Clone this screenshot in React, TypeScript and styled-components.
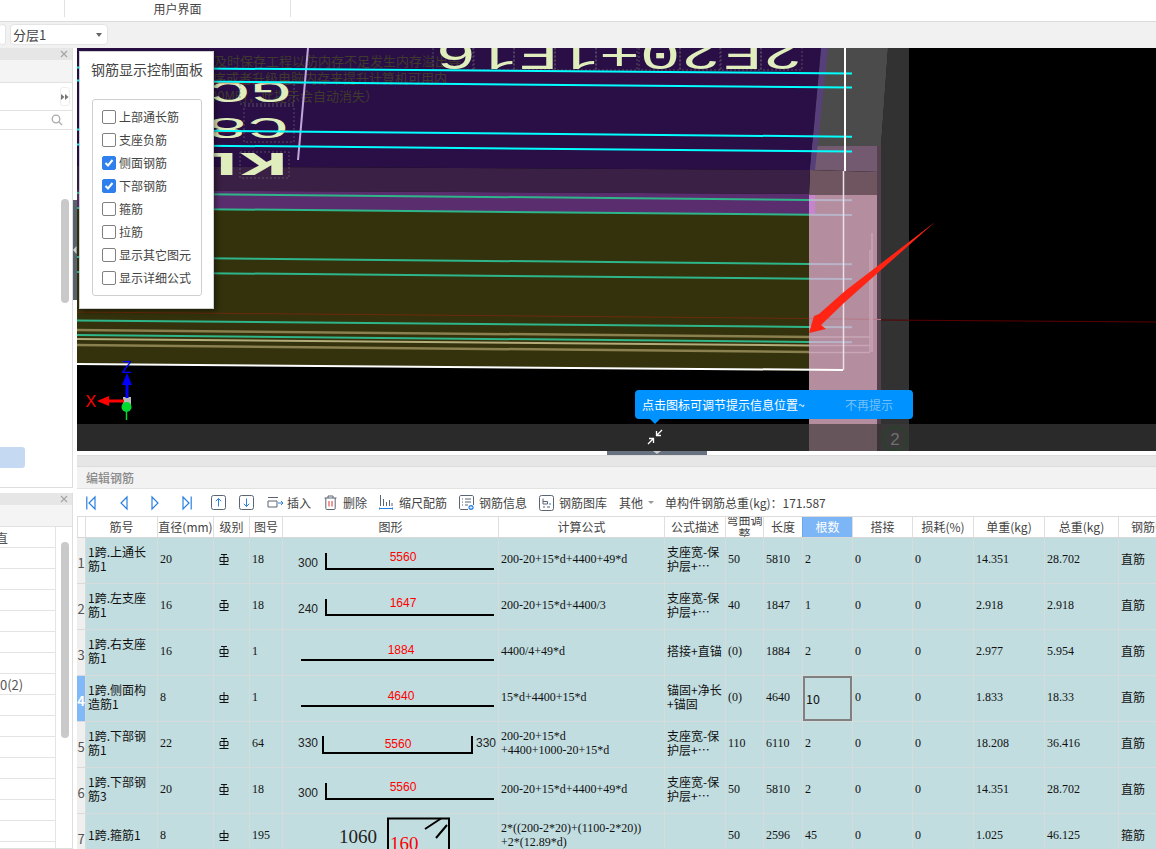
import React from "react";
import styled, { createGlobalStyle } from "styled-components";

const CJK = `"Noto Sans CJK SC", "Noto Sans", sans-serif`;
const MONO = `"Liberation Mono", "DejaVu Sans Mono", monospace`;
const SERIF = `"Liberation Serif", serif`;
const SANS = `"Liberation Sans", Arial, sans-serif`;

const Global = createGlobalStyle`
  html, body { margin: 0; padding: 0; background: #fff; overflow: hidden; }
  body { font-family: ${CJK}; font-size: 12px; color: #333; }
  * { box-sizing: border-box; }
`;

const Page = styled.div`
  width: 1156px;
  height: 849px;
  display: flex;
  flex-direction: column;
  overflow: hidden;
`;
const Ribbon = styled.div`
  height: 22px;
  flex: none;
  display: grid;
  grid-template-columns: 65px 226px 1fr;
  border-bottom: 1px solid #dcdcdc;
  background: #fff;
`;
const RibbonCell = styled.div`
  height: 17px;
  border-right: 1px solid #e2e2e2;
  font-size: 12px;
  line-height: 18px;
  text-align: center;
  color: #444;
  &:last-child { border-right: 0; }
`;
const SelectBar = styled.div`
  height: 26px;
  flex: none;
  display: flex;
  gap: 4px;
  padding-top: 2px;
  background: #f1f1f1;
`;
const SelectBox = styled.div<{ $w: number; $clipped?: boolean }>`
  width: ${(p) => p.$w}px;
  height: 21px;
  display: flex;
  align-items: center;
  justify-content: space-between;
  padding: 0 3px 0 2px;
  background: #fff;
  border: 1px solid #e4e4e4;
  border-radius: 4px;
  border-left-width: ${(p) => (p.$clipped ? 0 : 1)}px;
  font-size: 13px;
  color: #444;
`;
const Caret = styled.i`
  width: 0;
  height: 0;
  margin-right: 2px;
  border-left: 3px solid transparent;
  border-right: 3px solid transparent;
  border-top: 4px solid #666;
`;
const Main = styled.div`
  flex: 1;
  min-height: 0;
  display: flex;
`;
const LeftCol = styled.div`
  width: 73px;
  flex: none;
  display: flex;
  flex-direction: column;
  gap: 5px;
  background: #fff;
`;
const SidePanel = styled.section<{ $h: number }>`
  height: ${(p) => p.$h}px;
  flex: none;
  display: flex;
  flex-direction: column;
  border-right: 1px solid #dedede;
  border-bottom: 1px solid #dedede;
  overflow: hidden;
`;
const PaneHead = styled.div`
  height: 12px;
  flex: none;
  display: flex;
  justify-content: flex-end;
  align-items: center;
  padding-right: 4px;
  background: #e6e6e6;
  color: #999;
`;
const PaneBand = styled.div<{ $h: number }>`
  height: ${(p) => p.$h}px;
  flex: none;
  background: #f4f4f4;
  border-bottom: 1px solid #e2e2e2;
`;
const PaneRow = styled.div<{ $h: number }>`
  height: ${(p) => p.$h}px;
  flex: none;
  display: flex;
  align-items: center;
  justify-content: flex-end;
  padding-right: 2px;
  border-bottom: 1px solid #e2e2e2;
`;
const MiniBtn = styled.div`
  width: 10px;
  height: 19px;
  display: flex;
  align-items: center;
  justify-content: center;
  background: #fff;
  border: 1px solid #eee;
  border-radius: 3px;
`;
const SearchGlyph = styled.svg`
  margin-right: 7px;
`;
const PaneBody = styled.div`
  position: relative;
  flex: 1;
  min-height: 0;
`;
const Pill = styled.div`
  width: 25px;
  height: 21px;
  margin-top: 317px;
  background: #c5daf2;
  border-radius: 0 3px 3px 0;
`;
const ScrollThumb = styled.div<{ $top: number; $h: number }>`
  position: absolute;
  top: ${(p) => p.$top}px;
  left: 61px;
  width: 8px;
  height: ${(p) => p.$h}px;
  background: #c9c9c9;
  border-radius: 4px;
`;
const ListRow = styled.div<{ $indent: number }>`
  width: 56px;
  height: 21px;
  border-right: 1px solid #e4e4e4;
  border-bottom: 1px solid #e4e4e4;
  overflow: hidden;
  font-size: 13px;
  line-height: 21px;
  white-space: nowrap;
  text-indent: ${(p) => p.$indent}px;
  color: #555;
`;
const Splitter = styled.div`
  width: 4px;
  flex: none;
  padding-top: 152px;
  background: #fff;
`;
const SplitGrip = styled.div`
  height: 100px;
  display: flex;
  align-items: center;
  background: #59616d;
  color: #ccc;
`;
const RightCol = styled.div`
  flex: 1;
  min-width: 0;
  display: flex;
  flex-direction: column;
`;
const Viewport = styled.div`
  position: relative;
  height: 403px;
  flex: none;
  overflow: hidden;
  background: #000;
  svg { display: block; }
`;
const ControlPanel = styled.div`
  position: absolute;
  left: 2px;
  top: 3px;
  width: 135px;
  height: 258px;
  padding: 7px 11px 0 11px;
  background: #fff;
  border: 1px solid #d0d0d0;
  box-shadow: 2px 2px 6px rgba(0, 0, 0, 0.45);
`;
const PanelTitle = styled.div`
  font-size: 14px;
  line-height: 20px;
  color: #444;
  white-space: nowrap;
`;
const CheckGroup = styled.div`
  margin: 20px 0 0 1px;
  width: 110px;
  height: 197px;
  padding: 5px 0 0 9px;
  border: 1px solid #cfcfcf;
  border-radius: 3px;
  display: flex;
  flex-direction: column;
`;
const CheckRow = styled.div`
  height: 23px;
  display: flex;
  align-items: center;
  gap: 3px;
  font-size: 12px;
  color: #444;
  white-space: nowrap;
`;
const CheckBox = styled.span<{ $on: boolean }>`
  width: 14px;
  height: 14px;
  flex: none;
  display: flex;
  align-items: center;
  justify-content: center;
  border-radius: 2px;
  border: 1px solid ${(p) => (p.$on ? "#2f80ed" : "#808080")};
  background: ${(p) => (p.$on ? "#2f80ed" : "#fff")};
`;
const Tip = styled.div`
  position: absolute;
  left: 558px;
  top: 342px;
  width: 278px;
  height: 29px;
  display: flex;
  align-items: center;
  justify-content: space-between;
  padding: 0 20px 0 7px;
  background: #0092ff;
  border-radius: 4px;
  font-size: 12px;
  color: #fff;
  &::after {
    content: "";
    position: absolute;
    left: 15px;
    bottom: -5px;
    border-left: 5px solid transparent;
    border-right: 5px solid transparent;
    border-top: 5px solid #0092ff;
  }
`;
const TipMute = styled.span`
  color: #74c0f8;
  font-size: 12px;
`;
const TipIcon = styled.div`
  position: absolute;
  left: 570px;
  top: 381px;
  width: 16px;
  height: 16px;
`;
const Handle = styled.div`
  height: 4px;
  flex: none;
  display: flex;
  padding-left: 530px;
  background: #fff;
`;
const HandleGrip = styled.div`
  width: 100px;
  height: 4px;
  display: flex;
  justify-content: center;
  background: #687180;
  &::after {
    content: "";
    border-left: 4px solid transparent;
    border-right: 4px solid transparent;
    border-top: 3px solid #cfcfcf;
  }
`;
const EditHead = styled.div`
  height: 12px;
  flex: none;
  background: #e6e6e6;
  border-top: 1px solid #dcdcdc;
  border-bottom: 1px solid #dcdcdc;
`;
const EditTitle = styled.div`
  height: 22px;
  flex: none;
  padding-left: 9px;
  background: #f2f2f2;
  border-bottom: 1px solid #e2e2e2;
  font-size: 12px;
  font-weight: 500;
  line-height: 22px;
  color: #8a8a8a;
`;
const Tools = styled.div`
  height: 27px;
  flex: none;
  display: flex;
  align-items: center;
  padding-left: 9px;
  background: #fff;
  font-size: 12px;
  color: #444;
  white-space: nowrap;
  svg { display: block; flex: none; }
`;
const ToolGap = styled.span<{ $w: number }>`
  width: ${(p) => p.$w}px;
  flex: none;
`;
const ToolLabel = styled.span`
  flex: none;
  line-height: 14px;
`;
const ToolCaret = styled.i`
  width: 0;
  height: 0;
  flex: none;
  margin: 0 0 0 5px;
  border-left: 3px solid transparent;
  border-right: 3px solid transparent;
  border-top: 3px solid #999;
`;
const Sheet = styled.div`
  flex: 1;
  min-height: 0;
  overflow: hidden;
`;
const GRID = "8px 72px 56px 36px 33px 216px 166px 61px 38px 39px 50px 60px 61px 71px 74px 38px";
const HeadRow = styled.div`
  height: 22px;
  display: grid;
  grid-template-columns: ${GRID};
  background: #fff;
  border-top: 1px solid #dcdcdc;
  border-bottom: 1px solid #d8d8d8;
`;
const HeadCell = styled.div<{ $active?: boolean; $left?: boolean }>`
  display: flex;
  align-items: center;
  justify-content: ${(p) => (p.$left ? "flex-start" : "center")};
  padding-left: ${(p) => (p.$left ? 12 : 0)}px;
  overflow: hidden;
  font-size: 12px;
  line-height: 14.5px;
  text-align: center;
  white-space: ${(p) => (p.$left ? "nowrap" : "normal")};
  color: ${(p) => (p.$active ? "#fff" : "#444")};
  background: ${(p) => (p.$active ? "#7db6f6" : "transparent")};
  border-left: 1px solid ${(p) => (p.$active ? "#6aa7ec" : "#dfdfdf")};
`;
const DataRow = styled.div`
  height: 46px;
  display: grid;
  grid-template-columns: ${GRID};
  background: #c1dde0;
  border-bottom: 1px solid #d6dcdc;
`;
const RowHead = styled.div<{ $active: boolean }>`
  display: flex;
  align-items: center;
  justify-content: center;
  padding-top: 3px;
  font-size: 13px;
  font-weight: ${(p) => (p.$active ? 700 : 400)};
  color: ${(p) => (p.$active ? "#fff" : "#555")};
  background: ${(p) => (p.$active ? "#80b8f8" : "#efefef")};
`;
const Cell = styled.div<{ $num?: boolean; $selected?: boolean }>`
  display: flex;
  align-items: center;
  padding: 0 0 ${(p) => (p.$selected ? 0 : 3)}px ${(p) => (p.$selected ? 3 : 2)}px;
  overflow: hidden;
  border-left: 1px solid #d6dcdc;
  font-family: ${(p) => (p.$num ? SERIF : CJK)};
  font-size: ${(p) => (p.$selected ? 12.5 : 12)}px;
  line-height: 14px;
  white-space: pre;
  color: #111;
  box-shadow: ${(p) => (p.$selected ? "inset 0 0 0 2px #808080" : "none")};
`;
const GradeCell = styled(Cell)`
  padding-left: 5px;
  svg { display: block; }
`;
const ShapeCell = styled.div`
  overflow: hidden;
  border-left: 1px solid #d6dcdc;
  svg { display: block; }
`;

const columns = ["", "筋号", "直径(mm)", "级别", "图号", "图形", "计算公式", "公式描述", "弯曲调整", "长度", "根数", "搭接", "损耗(%)", "单重(kg)", "总重(kg)", "钢筋归类"];

type Shape = "hook" | "flat" | "double" | "stirrup";
interface Row {
  name: string; d: string; grade: "A" | "B"; fig: string; shape: Shape; main: string; side?: string;
  formula: string; desc: string; bend: string; len: string; count: string; unit: string; total: string; kind: string;
}
const DESC = "支座宽-保\n护层+…";
const rows: Row[] = [
  { name: "1跨.上通长\n筋1", d: "20", grade: "A", fig: "18", shape: "hook", main: "5560", side: "300", formula: "200-20+15*d+4400+49*d", desc: DESC, bend: "50", len: "5810", count: "2", unit: "14.351", total: "28.702", kind: "直筋" },
  { name: "1跨.左支座\n筋1", d: "16", grade: "A", fig: "18", shape: "hook", main: "1647", side: "240", formula: "200-20+15*d+4400/3", desc: DESC, bend: "40", len: "1847", count: "1", unit: "2.918", total: "2.918", kind: "直筋" },
  { name: "1跨.右支座\n筋1", d: "16", grade: "A", fig: "1", shape: "flat", main: "1884", formula: "4400/4+49*d", desc: "搭接+直锚", bend: "(0)", len: "1884", count: "2", unit: "2.977", total: "5.954", kind: "直筋" },
  { name: "1跨.侧面构\n造筋1", d: "8", grade: "B", fig: "1", shape: "flat", main: "4640", formula: "15*d+4400+15*d", desc: "锚固+净长\n+锚固", bend: "(0)", len: "4640", count: "10", unit: "1.833", total: "18.33", kind: "直筋" },
  { name: "1跨.下部钢\n筋1", d: "22", grade: "A", fig: "64", shape: "double", main: "5560", side: "330", formula: "200-20+15*d\n+4400+1000-20+15*d", desc: DESC, bend: "110", len: "6110", count: "2", unit: "18.208", total: "36.416", kind: "直筋" },
  { name: "1跨.下部钢\n筋3", d: "20", grade: "A", fig: "18", shape: "hook", main: "5560", side: "300", formula: "200-20+15*d+4400+49*d", desc: DESC, bend: "50", len: "5810", count: "2", unit: "14.351", total: "28.702", kind: "直筋" },
  { name: "1跨.箍筋1", d: "8", grade: "B", fig: "195", shape: "stirrup", main: "160", side: "1060", formula: "2*((200-2*20)+(1100-2*20))\n+2*(12.89*d)", desc: "", bend: "50", len: "2596", count: "45", unit: "1.025", total: "46.125", kind: "箍筋" },
];

const checks: [string, boolean][] = [
  ["上部通长筋", false], ["支座负筋", false], ["侧面钢筋", true], ["下部钢筋", true],
  ["箍筋", false], ["拉筋", false], ["显示其它图元", false], ["显示详细公式", false],
];

const sideList: [string, number][] = [
  ["直", -5], ["", 0], ["", 0], ["", 0], ["", 0], ["", 0], ["", 0], ["0(2)", 0],
  ["", 0], ["", 0], ["", 0], ["", 0], ["", 0], ["", 0], ["", 0], ["", 0],
];

const Close = () => (
  <svg width="8" height="8" viewBox="0 0 8 8"><path d="M1 1l6 6M7 1L1 7" stroke="#a5a5a5" strokeWidth="1.2" /></svg>
);

const GradeIcon = ({ kind }: { kind: "A" | "B" }) => (
  <svg width="10" height="11" viewBox="0 0 10 11" fill="none" stroke="#111" strokeWidth="1">
    {kind === "A" && <path d="M2 .5h6" />}
    <path d="M5 0v10.5M.5 10.5h9M1 3.5h8v4H1z" />
  </svg>
);

const SHAPE_LINE = { stroke: "#000", strokeWidth: 2, fill: "none" };
const ShapeFig = ({ r }: { r: Row }) => {
  const lab = { fontFamily: SANS, fontSize: 12, fill: "#222" };
  const red = { fontFamily: SANS, fontSize: 12, fill: "#f00", textAnchor: "middle" as const };
  if (r.shape === "flat") {
    return (
      <svg width="215" height="45">
        <text x={118} y={24} {...red}>{r.main}</text>
        <path d="M18 30H211" {...SHAPE_LINE} />
      </svg>
    );
  }
  if (r.shape === "hook") {
    return (
      <svg width="215" height="45">
        <text x={15} y={29} {...lab}>{r.side}</text>
        <text x={120} y={23} {...red}>{r.main}</text>
        <path d="M43 15V31H211" {...SHAPE_LINE} />
      </svg>
    );
  }
  if (r.shape === "double") {
    return (
      <svg width="215" height="45">
        <text x={15} y={25} {...lab}>{r.side}</text>
        <text x={193} y={25} {...lab}>{r.side}</text>
        <text x={115} y={26} {...red}>{r.main}</text>
        <path d="M40 14V31H189V14" {...SHAPE_LINE} />
      </svg>
    );
  }
  return (
    <svg width="215" height="45">
      <text x={56} y={29} fontFamily={SERIF} fontSize={19} fill="#222">{r.side}</text>
      <text x={107} y={36} fontFamily={SERIF} fontSize={19} fill="#f00">{r.main}</text>
      <path d="M105 45V4.5H166V45" {...SHAPE_LINE} />
      <path d="M142 15L158 4.5M153 24L164 11" {...SHAPE_LINE} />
    </svg>
  );
};

const Nav = ({ dir, bar }: { dir: "l" | "r"; bar?: boolean }) => {
  const w = bar ? 10 : 8;
  const pts = dir === "l" ? (bar ? "9,2 3,8 9,14" : "7,2 1,8 7,14") : "1,2 7,8 1,14";
  return (
    <svg width={w} height="16" viewBox={`0 0 ${w} 16`} fill="none" stroke="#2a80e0" strokeWidth="1.2">
      <polygon points={pts} />
      {bar && <path d={dir === "l" ? "M.8 1.5v13" : "M9.2 1.5v13"} />}
    </svg>
  );
};
const MoveIcon = ({ up }: { up?: boolean }) => (
  <svg width="15" height="15" viewBox="0 0 15 15" fill="none">
    <rect x=".5" y=".5" width="14" height="14" rx="2" stroke="#5b6472" />
    <path d={up ? "M7.5 11.5v-8M4.8 6.2l2.7-2.7 2.7 2.7" : "M7.5 3.5v8M4.8 8.8l2.7 2.7 2.7-2.7"} stroke="#2a80e0" />
  </svg>
);
const InsertIcon = () => (
  <svg width="17" height="14" viewBox="0 0 17 14" fill="none">
    <path d="M1 1.5h10M1 5h9v6H1V5" stroke="#5b6472" />
    <path d="M11 7h5M14 5l2 2-2 2" stroke="#2a80e0" />
  </svg>
);
const TrashIcon = () => (
  <svg width="13" height="15" viewBox="0 0 13 15" fill="none">
    <path d="M.5 3h12M4 3V1h5v2M1.8 3v10.5c0 .6.4 1 1 1h7.4c.6 0 1-.4 1-1V3" stroke="#5b6472" />
    <path d="M5 6v5.5M8 6v5.5" stroke="#e03030" />
  </svg>
);
const ScaleIcon = () => (
  <svg width="14" height="16" viewBox="0 0 14 16" fill="none">
    <path d="M1.5 0v11M4.5 4v7M7.5 7v4M10.5 5v6M13 8v3" stroke="#5b6472" />
    <path d="M.5 12.5v2M.5 13.5h13M13.5 12.5v2" stroke="#2a80e0" />
  </svg>
);
const InfoIcon = () => (
  <svg width="16" height="16" viewBox="0 0 16 16" fill="none">
    <path d="M9 14.5H2c-.8 0-1.5-.7-1.5-1.5V2C.5 1.2 1.2.5 2 .5h11c.8 0 1.5.7 1.5 1.5v8" stroke="#5b6472" />
    <path d="M3 4h1M6 4h6M3 7h1M6 7h6M3 10h1M6 10h3" stroke="#5b6472" />
    <circle cx="12" cy="12.5" r="2.6" fill="#2a80e0" />
    <path d="M12 11v3M10.5 12.5h3" stroke="#fff" strokeWidth=".8" />
  </svg>
);
const LibIcon = () => (
  <svg width="15" height="16" viewBox="0 0 15 16" fill="none">
    <rect x=".5" y=".5" width="14" height="15" rx="2" stroke="#5b6472" />
    <path d="M4 3.5V9h4.5V6.5H4M4 12h2M8 12h3" stroke="#5b6472" />
    <path d="M10 9h2" stroke="#2a80e0" />
  </svg>
);

const slopeLine = (x1: number, y1: number, x2: number, y2: number, stroke: string, w: number, key: string) => (
  <line key={key} x1={x1} y1={y1} x2={x2} y2={y2} stroke={stroke} strokeWidth={w} />
);

const cells2E = [433, 473, 514, 555, 596, 639, 680, 720, 761];
const ghost = { fontFamily: CJK, fontSize: 13, fill: "#3e3a2c", textAnchor: "end" as const };
const glyph = { fontFamily: MONO, fill: "#dfeebc" };

const Scene = () => (
  <svg width="1079" height="403" viewBox="77 48 1079 403">
    <rect x="77" y="48" width="1079" height="403" fill="#000" />
    <polygon points="888,48 909,48 909,424 877,424 881,146" fill="#323232" />
    <polygon points="826,48 888,48 881,146 812,146" fill="#4b4b4b" />
    <polygon points="812,146 881,146 880,172 810,170" fill="#735a70" />
    <polygon points="810,170 880,172 878,195 809,195" fill="#6f5560" />
    <polygon points="77,48 821,48 810,170 77,166" fill="#2a0f47" />
    <polygon points="821,48 828,48 815,170 810,170" fill="#57407a" />
    <polygon points="77,166 810,170 809,194 77,190" fill="#3a2045" />
    <polygon points="77,190 809,194 809,215 77,208" fill="#5a2e6e" />
    <polygon points="77,208 809,215 809,371 77,364" fill="#33320c" />
    <rect x="809" y="195" width="68" height="229" fill="#b48d9f" />
    <rect x="809" y="195" width="6" height="19" fill="#c583d0" />
    <rect x="877" y="146" width="4" height="278" fill="#54404e" />

    <text x="461" y="66" {...ghost}>及时保存工程以防内存不足发生内存溢出等</text>
    <text x="447" y="83" {...ghost}>用程序或者升级电脑内存来提升计算机可用内</text>
    <text x="378" y="101" {...ghost}>200M时，此提示会自动消失）</text>

    {cells2E.map((x) => (
      <rect key={x} x={x} y="44" width="41" height="26" fill="none" stroke="#777" strokeWidth=".6" strokeDasharray="2 2" />
    ))}
    <text transform="translate(803,41) rotate(180) scale(1.62,1)" fontSize="42" {...glyph}>2E20+1E16</text>
    <text transform="translate(292,82) rotate(180) scale(2.3,1)" fontSize="30" {...glyph}>GC</text>
    <text transform="translate(289,118) rotate(180) scale(2.3,1)" fontSize="30" {...glyph}>C8</text>
    <text transform="translate(288,153) rotate(180) scale(2.4,1)" fontSize="33" {...glyph} fontWeight={700}>KL</text>
    <rect x="240" y="82" width="54" height="22" fill="none" stroke="#777" strokeWidth=".6" strokeDasharray="2 2" />
    <rect x="244" y="106" width="50" height="36" fill="none" stroke="#777" strokeWidth=".6" strokeDasharray="2 2" />
    <rect x="240" y="152" width="49" height="26" fill="none" stroke="#777" strokeWidth=".6" strokeDasharray="2 2" />
    <path d="M213 82.5H292M213 131.5H238M280 131.5H288" stroke="#f03010" strokeWidth="1.3" />

    <line x1="308" y1="48" x2="298" y2="160" stroke="#bfa9d9" strokeWidth="2" />

    {[[67.5, 73.5], [80.5, 87.5], [129.5, 136.7], [144.5, 151.6]].map(([a, b], i) =>
      slopeLine(77, a, 852, b, "#00ffff", 2, `c${i}`)
    )}

    {[[193, 200], [208, 214.7], [257, 264], [272, 278.7], [320.5, 327], [335, 342]].map(([a, b], i) => (
      <g key={`t${i}`}>
        {slopeLine(77, a, 809, b, "#2fb58a", 2, "a")}
        {slopeLine(809, b, 852, b + 0.3, "#b8b4c8", 2, "b")}
      </g>
    ))}
    {slopeLine(77, 330, 809, 337, "#8a7f4e", 2.5, "o1")}
    {slopeLine(77, 339, 809, 345.5, "#b3ac7a", 2, "o2")}
    {slopeLine(77, 345, 809, 352, "#8a7f4e", 2.5, "o3")}
    {slopeLine(77, 312, 809, 318.5, "#6b2a0c", 1, "r1")}
    {slopeLine(881, 320, 1156, 322, "#5a0000", 1, "r2")}
    {slopeLine(809, 318.5, 881, 319.5, "#b57a88", 1, "r3")}

    <path d="M872 233V352M870 250V352" stroke="#c9a3b4" strokeWidth="1.5" fill="none" />
    <path d="M809 337H870M809 345.5H870M809 352.5H870" stroke="#c8a6b6" strokeWidth="1.5" fill="none" />

    <line x1="77" y1="364" x2="843" y2="370" stroke="#fff" strokeWidth="2" />
    <line x1="845" y1="48" x2="845" y2="171" stroke="#fff" strokeWidth="2" />
    <line x1="843.5" y1="171" x2="843.5" y2="370" stroke="#ece2e6" strokeWidth="1.5" />

    <polygon points="935,222 845,291 819,314 814,316 809,333 826,329 821,325 845,302" fill="#ff2414" />

    <rect x="123" y="397" width="8" height="8" fill="#b9b9b9" />
    <path d="M127 398V384" stroke="#0000ff" strokeWidth="3" />
    <polygon points="127,373 122,385 132,385" fill="#0000ff" />
    <path d="M124 401H106" stroke="#ff0000" strokeWidth="3" />
    <polygon points="97,401 109,396 109,406" fill="#ff0000" />
    <circle cx="126.500" cy="407" r="5" fill="#00d92e" />
    <path d="M126.500 410V420" stroke="#00d92e" strokeWidth="1.5" />
    <text x="122" y="373" fontFamily={SANS} fontSize="16" fill="#0000ff">Z</text>
    <text x="85.500" y="407" fontFamily={SANS} fontSize="16" fill="#ff0000">X</text>

    <rect x="77" y="424" width="1079" height="27" fill="#2a2a2a" />
    <rect x="809" y="424" width="68" height="27" fill="#66555a" />
    <rect x="877" y="424" width="4" height="27" fill="#3c3338" />
    <rect x="881" y="424" width="28" height="27" fill="#383838" />
    <circle cx="895" cy="439" r="12" fill="none" stroke="#1c4a1c" strokeWidth="1" />
    <text x="895" y="445" textAnchor="middle" fontFamily={SANS} fontSize="17" fill="#707070">2</text>
  </svg>
);

export default function App() {
  return (
    <Page>
      <Global />
      <Ribbon>
        <RibbonCell />
        <RibbonCell>用户界面</RibbonCell>
        <RibbonCell />
      </Ribbon>
      <SelectBar>
        <SelectBox $w={6} $clipped />
        <SelectBox $w={98}>分层1<Caret /></SelectBox>
      </SelectBar>
      <Main>
        <LeftCol>
          <SidePanel $h={440}>
            <PaneHead><Close /></PaneHead>
            <PaneBand $h={23} />
            <PaneRow $h={28}>
              <MiniBtn>
                <svg width="8" height="6" viewBox="0 0 8 6"><path d="M0 0l3.500 3L0 6zM4 0l3.500 3L4 6z" fill="#777" /></svg>
              </MiniBtn>
            </PaneRow>
            <PaneRow $h={19}>
              <SearchGlyph width="12" height="12" viewBox="0 0 12 12" fill="none" stroke="#aaa" strokeWidth="1.3">
                <circle cx="5" cy="5" r="3.800" /><path d="M8 8l3 3" />
              </SearchGlyph>
            </PaneRow>
            <PaneBody>
              <Pill />
              <ScrollThumb $top={69} $h={104} />
            </PaneBody>
          </SidePanel>
          <SidePanel $h={356}>
            <PaneHead><Close /></PaneHead>
            <PaneBand $h={22} />
            <PaneBody>
              {sideList.map(([t, ind], i) => (
                <ListRow key={i} $indent={ind}>{t}</ListRow>
              ))}
              <ScrollThumb $top={15} $h={196} />
            </PaneBody>
          </SidePanel>
        </LeftCol>
        <Splitter>
          <SplitGrip>
            <svg width="4" height="8" viewBox="0 0 4 8"><path d="M3.500 0v8L0 4z" fill="#cfcfcf" /></svg>
          </SplitGrip>
        </Splitter>
        <RightCol>
          <Viewport>
            <Scene />
            <ControlPanel>
              <PanelTitle>钢筋显示控制面板</PanelTitle>
              <CheckGroup>
                {checks.map(([t, on]) => (
                  <CheckRow key={t}>
                    <CheckBox $on={on}>
                      {on && (
                        <svg width="10" height="10" viewBox="0 0 10 10" fill="none" stroke="#fff" strokeWidth="2"><path d="M1.500 5l2.500 2.500L8.500 2" /></svg>
                      )}
                    </CheckBox>
                    {t}
                  </CheckRow>
                ))}
              </CheckGroup>
            </ControlPanel>
            <Tip>
              <span>点击图标可调节提示信息位置~</span>
              <TipMute>不再提示</TipMute>
            </Tip>
            <TipIcon>
              <svg width="16" height="16" viewBox="0 0 16 16" fill="none" stroke="#fff" strokeWidth="1.300">
                <path d="M15 1L9.500 6.500M9.500 2v4.500H14M1 15l5.500-5.500M2 9.500h4.500V14" />
              </svg>
            </TipIcon>
          </Viewport>
          <Handle><HandleGrip /></Handle>
          <EditHead />
          <EditTitle>编辑钢筋</EditTitle>
          <Tools>
            <Nav dir="l" bar />
            <ToolGap $w={24} /><Nav dir="l" />
            <ToolGap $w={23} /><Nav dir="r" />
            <ToolGap $w={23} /><Nav dir="r" bar />
            <ToolGap $w={19} /><MoveIcon up />
            <ToolGap $w={13} /><MoveIcon />
            <ToolGap $w={13} /><InsertIcon />
            <ToolGap $w={3} /><ToolLabel>插入</ToolLabel>
            <ToolGap $w={13} /><TrashIcon />
            <ToolGap $w={6} /><ToolLabel>删除</ToolLabel>
            <ToolGap $w={12} /><ScaleIcon />
            <ToolGap $w={6} /><ToolLabel>缩尺配筋</ToolLabel>
            <ToolGap $w={12} /><InfoIcon />
            <ToolGap $w={4} /><ToolLabel>钢筋信息</ToolLabel>
            <ToolGap $w={12} /><LibIcon />
            <ToolGap $w={5} /><ToolLabel>钢筋图库</ToolLabel>
            <ToolGap $w={12} /><ToolLabel>其他</ToolLabel>
            <ToolCaret />
            <ToolGap $w={11} /><ToolLabel>单构件钢筋总重(kg)：171.587</ToolLabel>
          </Tools>
          <Sheet>
            <HeadRow>
              {columns.map((c, i) => (
                <HeadCell key={i} $active={c === "根数"} $left={c === "钢筋归类"}>{c}</HeadCell>
              ))}
            </HeadRow>
            {rows.map((r, i) => (
              <DataRow key={i}>
                <RowHead $active={i === 3}>{i + 1}</RowHead>
                <Cell>{r.name}</Cell>
                <Cell $num>{r.d}</Cell>
                <GradeCell><GradeIcon kind={r.grade} /></GradeCell>
                <Cell $num>{r.fig}</Cell>
                <ShapeCell><ShapeFig r={r} /></ShapeCell>
                <Cell $num>{r.formula}</Cell>
                <Cell>{r.desc}</Cell>
                <Cell $num>{r.bend}</Cell>
                <Cell $num>{r.len}</Cell>
                {i === 3 ? <Cell $selected>{r.count}</Cell> : <Cell $num>{r.count}</Cell>}
                <Cell $num>0</Cell>
                <Cell $num>0</Cell>
                <Cell $num>{r.unit}</Cell>
                <Cell $num>{r.total}</Cell>
                <Cell>{r.kind}</Cell>
              </DataRow>
            ))}
          </Sheet>
        </RightCol>
      </Main>
    </Page>
  );
}
